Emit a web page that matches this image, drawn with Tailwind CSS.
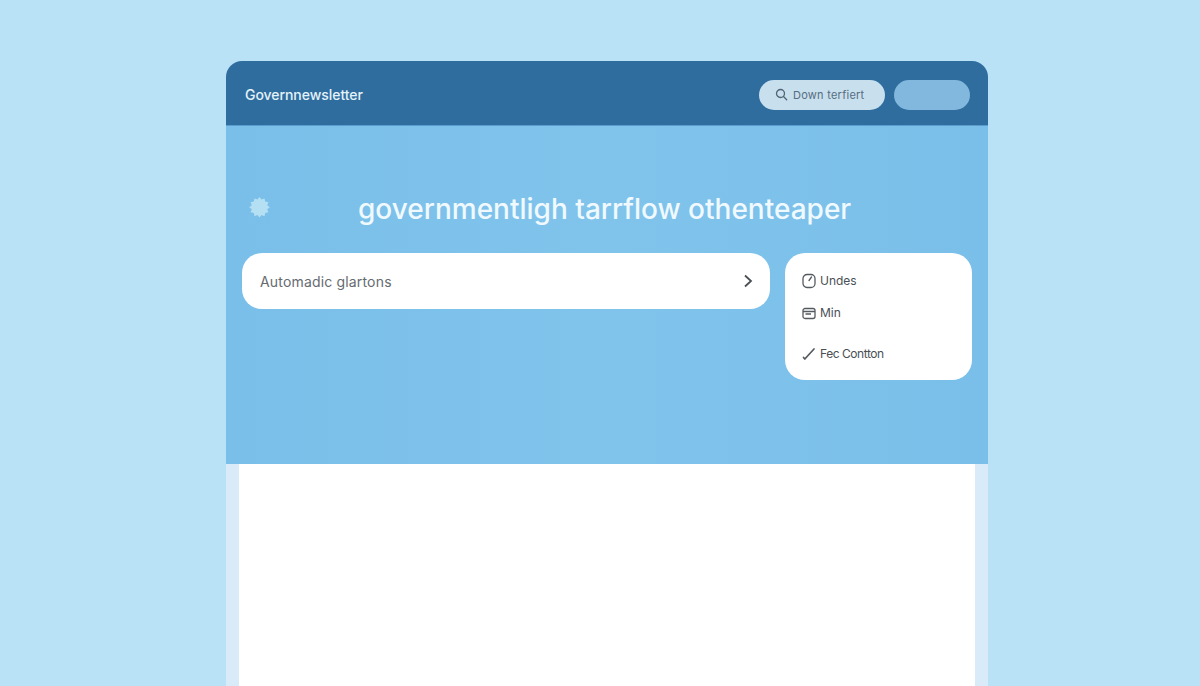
<!DOCTYPE html>
<html>
<head>
<meta charset="utf-8">
<title>Governnewsletter</title>
<script src="https://cdn.jsdelivr.net/npm/@tailwindcss/browser@4"></script>
</head>
<body class="m-0">
<div class="w-[1200px] h-[686px] overflow-hidden bg-[#b9e2f6] flex pt-[61px] pl-[226px] font-['Inter','Liberation_Sans',sans-serif]">
  <div class="w-[762px] h-[625px] flex flex-col rounded-t-[16px] overflow-hidden">
    <header class="h-[65px] shrink-0 bg-[#2f6d9f] flex items-center pt-[3px] pl-[19px] pr-[18px] border-b border-[#5a9ccd]">
      <span class="text-[14px] font-medium text-[#e4f2fa] tracking-[-0.05px]">Governnewsletter</span>
      <div class="ml-auto flex items-center gap-[9px]">
        <div class="w-[126px] h-[30px] rounded-full bg-[#c8dfee] flex items-center pl-[16px] gap-[5px]">
          <svg width="13" height="13" viewBox="0 0 13 13" fill="none" stroke="#4f6475" stroke-width="1.3" stroke-linecap="round"><circle cx="5.5" cy="5.5" r="4"/><path d="M8.5 8.5 L11.7 11.7"/></svg>
          <span class="pt-[2px] text-[11px] text-[#566d80] tracking-[0.25px]">Down terfiert</span>
        </div>
        <div class="w-[76px] h-[30px] rounded-full bg-[#83b8de]"></div>
      </div>
    </header>
    <section class="h-[338px] shrink-0 bg-linear-to-r from-[#7abfe9] via-[#80c4ec] to-[#7abfe9] px-[16px]">
      <div class="relative h-[127px]">
        <svg class="absolute left-[6px] top-[70px]" width="23" height="23" viewBox="0 0 23 23" fill="#b5dff3"><path d="M11.5 1l2 2.6 3-1.2.7 3.200 3.200.7-1.200 3 2.600 2-2.600 2 1.200 3-3.200.7-.7 3.200-3-1.200-2 2.600-2-2.600-3 1.200-.7-3.200-3.200-.7 1.200-3-2.600-2 2.600-2-1.200-3 3.200-.7.7-3.200 3 1.200z"/></svg>
        <h1 class="absolute left-[116px] top-[65px] whitespace-nowrap text-[28px] leading-[36px] font-medium text-[#f0f9fe]">governmentligh tarrflow othenteaper</h1>
      </div>
      <div class="flex items-start gap-[15px]">
        <div class="w-[528px] h-[56px] rounded-[20px] bg-white flex items-center pl-[18px] pr-[15px]">
          <span class="text-[14px] text-[#666b70] tracking-[0.17px]">Automadic glartons</span>
          <svg class="ml-auto" width="14" height="16" viewBox="0 0 14 16" fill="none" stroke="#4a4f54" stroke-width="1.800"><path d="M4 2.500 L10 8 L4 13.500"/></svg>
        </div>
        <div class="w-[187px] h-[127px] rounded-[20px] bg-white pl-[17px] pt-[19px] text-[12px] text-[#4a4f55] flex flex-col">
          <div class="flex items-center gap-[4px] h-[18px]">
            <svg width="14" height="16" viewBox="0 0 14 16" fill="none" stroke="#555a60" stroke-width="1.300" stroke-linecap="round"><rect x="1" y="1.500" width="12" height="13" rx="4"/><path d="M7 7.500 L9.500 4"/></svg>
            <span>Undes</span>
          </div>
          <div class="flex items-center gap-[4px] h-[18px] mt-[14px]">
            <svg width="14" height="14" viewBox="0 0 14 14" fill="none" stroke="#555a60" stroke-width="1.300"><rect x="1" y="2.500" width="12" height="10" rx="2"/><path d="M1 5.500 H13 M3.500 8 H9"/></svg>
            <span>Min</span>
          </div>
          <div class="flex items-center gap-[4px] h-[18px] mt-[23px]">
            <svg width="14" height="14" viewBox="0 0 14 14" fill="none" stroke="#555a60" stroke-width="1.700" stroke-linecap="round" stroke-linejoin="round"><path d="M1.500 10.500 L2.800 12 L12 2"/></svg>
            <span class="tracking-[-0.45px]">Fec Contton</span>
          </div>
        </div>
      </div>
    </section>
    <section class="flex-1 bg-[#d9eaf8] px-[13px]">
      <div class="h-full bg-white"></div>
    </section>
  </div>
</div>
</body>
</html>
